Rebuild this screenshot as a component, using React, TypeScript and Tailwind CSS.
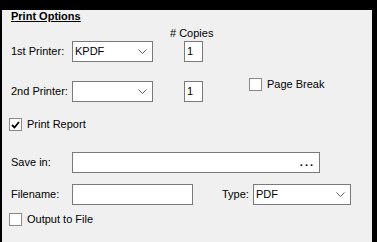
import type { ReactNode } from 'react';

const Chevron = () => (
  <svg width="9" height="5" viewBox="0 0 9 5" className="shrink-0">
    <polyline points="0.5,0.5 4.5,4.5 8.5,0.5" fill="none" stroke="#606060" strokeWidth="1" />
  </svg>
);

const ComboBox = ({ value, width }: { value?: string; width: string }) => (
  <div className={`${width} h-[21px] bg-white border border-[#7a7a7a] flex items-center justify-between pl-[2px] pr-[5px]`}>
    <span className="text-[11px] leading-none">{value}</span>
    <Chevron />
  </div>
);

const CheckBox = ({ checked, children }: { checked?: boolean; children: ReactNode }) => (
  <div className="flex items-center h-[13px]">
    <div className="w-[13px] h-[13px] bg-white border border-[#8a8a8a] flex items-center justify-center">
      {checked && (
        <svg width="9" height="8" viewBox="0 0 9 8">
          <polyline points="1,4 3.5,6.5 8,1" fill="none" stroke="#000" strokeWidth="1.8" />
        </svg>
      )}
    </div>
    <span className="ml-[5px] text-[11px] leading-[13px]">{children}</span>
  </div>
);

export default function App() {
  return (
    <div
      className="w-[377px] h-[242px] bg-black pl-[2px] pt-[2px] pr-[5px] pb-[3px] text-black"
      style={{ fontFamily: '"Liberation Sans", Arial, sans-serif' }}
    >
      <div className="h-full bg-[#f0f0f0] border-b-2 border-[#a0a0a0] pl-[7px]">
        {/* Title */}
        <div className="mt-[8px] h-[13px] ml-[2px] text-[11px] leading-[13px] font-bold underline">
          Print Options
        </div>

        {/* # Copies */}
        <div className="mt-[4px] h-[13px] ml-[161px] text-[11px] leading-[13px]">
          # Copies
        </div>

        {/* 1st printer */}
        <div className="mt-[1px] flex items-center h-[21px]">
          <span className="w-[63px] pl-[2px] text-[11px]">1st Printer:</span>
          <ComboBox value="KPDF" width="w-[81px]" />
          <div className="ml-[31px] w-[19px] h-[21px] bg-white border border-[#7a7a7a] pl-[2px] text-[11px] leading-[19px]">
            1
          </div>
        </div>

        {/* 2nd printer */}
        <div className="mt-[16px] flex items-end h-[24px]">
          <span className="w-[63px] pl-[2px] text-[11px] self-center mt-[3px]">2nd Printer:</span>
          <ComboBox width="w-[81px]" />
          <div className="ml-[31px] w-[19px] h-[21px] bg-white border border-[#7a7a7a] pl-[2px] text-[11px] leading-[19px]">
            1
          </div>
          <div className="ml-[46px] self-start">
            <CheckBox>Page Break</CheckBox>
          </div>
        </div>

        {/* Print Report */}
        <div className="mt-[16px]">
          <CheckBox checked>Print Report</CheckBox>
        </div>

        {/* Save in */}
        <div className="mt-[21px] flex items-center h-[21px]">
          <span className="w-[63px] pl-[2px] text-[11px]">Save in:</span>
          <div className="w-[248px] h-[21px] bg-white border border-[#7a7a7a] flex items-center justify-end pr-[4px]">
            <span className="text-[11px] font-bold tracking-[2px] leading-none">...</span>
          </div>
        </div>

        {/* Filename / Type */}
        <div className="mt-[10px] flex items-center h-[22px]">
          <span className="w-[63px] pl-[2px] text-[11px]">Filename:</span>
          <div className="w-[121px] h-[21px] bg-white border border-[#7a7a7a]" />
          <span className="ml-[29px] w-[31px] text-[11px]">Type:</span>
          <ComboBox value="PDF" width="w-[98px]" />
        </div>

        {/* Output to File */}
        <div className="mt-[8px]">
          <CheckBox>Output to File</CheckBox>
        </div>
      </div>
    </div>
  );
}
